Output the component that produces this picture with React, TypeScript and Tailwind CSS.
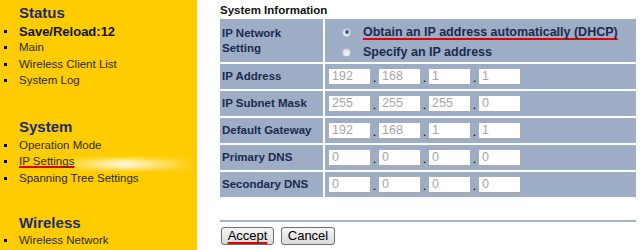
import React from "react";

const font = { fontFamily: '"Liberation Sans", Arial, sans-serif' };

const redLine = "underline decoration-[#e00000] decoration-2 [text-decoration-skip-ink:none]";

function NavItem({ children, bold, active }: { children: React.ReactNode; bold?: boolean; active?: boolean }) {
  return (
    <li className="relative flex h-[16.5px] items-center">
      <span className="ml-[4px] h-[3px] w-[3px] shrink-0 bg-black" />
      {active && (
        <span className="absolute left-[55px] top-[5px] h-[10px] w-[140px] bg-linear-to-r from-transparent via-white/85 to-transparent blur-[2px]" />
      )}
      <span
        className={
          bold
            ? "relative ml-[12px] whitespace-nowrap text-[13px] font-bold text-[#111]"
            : active
            ? `relative ml-[12px] whitespace-nowrap text-[11.5px] text-[#2b2a1a] ${redLine} underline-offset-[1px]`
            : "relative ml-[12px] whitespace-nowrap text-[11.5px] text-[#2b2a1a]"
        }
      >
        {children}
      </span>
    </li>
  );
}

function Heading({ children, className }: { children: React.ReactNode; className?: string }) {
  return <h3 className={`ml-[19px] text-[15px] font-bold leading-[20px] text-[#1b2a6e] ${className || ""}`}>{children}</h3>;
}

function IpInputs({ values }: { values: string[] }) {
  return (
    <div className="flex items-center pl-[3px]">
      {values.map((v, i) => (
        <React.Fragment key={i}>
          {i > 0 && <span className="flex h-[17px] w-[7px] items-end justify-center text-[13px] leading-[14px] text-black">.</span>}
          <input
            readOnly
            value={v}
            className="h-[17px] w-[43px] border border-[#acacac] bg-white pl-[3px] text-[12.5px] text-[#a6a6a6] outline-none"
          />
        </React.Fragment>
      ))}
    </div>
  );
}

const rows: [string, string[]][] = [
  ["IP Address", ["192", "168", "1", "1"]],
  ["IP Subnet Mask", ["255", "255", "255", "0"]],
  ["Default Gateway", ["192", "168", "1", "1"]],
  ["Primary DNS", ["0", "0", "0", "0"]],
  ["Secondary DNS", ["0", "0", "0", "0"]],
];

function Radio({ checked }: { checked?: boolean }) {
  return (
    <span className="ml-[17px] flex h-[9px] w-[9px] shrink-0 items-center justify-center rounded-full border border-[#b9c1cd] bg-linear-to-b from-[#dedede] to-[#fafafa]">
      {checked && <span className="h-[4px] w-[4px] rounded-full bg-[#2d5fa8]" />}
    </span>
  );
}

export default function App() {
  return (
    <div className="flex h-[250px] w-[640px] overflow-hidden bg-white" style={font}>
      <aside className="w-[197px] shrink-0 bg-[#ffcc00] pt-[3px]">
        <Heading>Status</Heading>
        <ul>
          <NavItem bold>Save/Reload:12</NavItem>
          <NavItem>Main</NavItem>
          <NavItem>Wireless Client List</NavItem>
          <NavItem>System Log</NavItem>
        </ul>
        <Heading className="mt-[28px]">System</Heading>
        <ul>
          <NavItem>Operation Mode</NavItem>
          <NavItem active>IP Settings</NavItem>
          <NavItem>Spanning Tree Settings</NavItem>
        </ul>
        <Heading className="mt-[26px]">Wireless</Heading>
        <ul>
          <NavItem>Wireless Network</NavItem>
        </ul>
      </aside>

      <main className="flex-1 pl-[23px] pr-[4px] pt-[3px]">
        <h2 className="h-[14px] text-[11.5px] font-bold leading-[14px] text-[#111]">System Information</h2>
        <div className="mt-[2px] grid grid-cols-[103px_1fr] gap-[2px]">
          <div className="flex h-[43px] items-center bg-[#9cadc5] pl-[2px] text-[11.5px] font-bold leading-[14.5px] text-[#1a2a50]">
            IP Network
            <br />
            Setting
          </div>
          <div className="flex h-[43px] flex-col justify-center gap-[6px] bg-[#9cadc5] pt-[3px] text-[12.5px] font-bold leading-[14px] text-[#1a2a50]">
            <div className="flex items-center">
              <Radio checked />
              <span className={`ml-[12px] ${redLine} underline-offset-[1.5px]`}>
                Obtain an IP address automatically (DHCP)
              </span>
            </div>
            <div className="flex items-center">
              <Radio />
              <span className="ml-[12px]">Specify an IP address</span>
            </div>
          </div>
          {rows.map(([label, values]) => (
            <React.Fragment key={label}>
              <div className="flex h-[25px] items-center bg-[#9cadc5] pl-[2px] text-[11.5px] font-bold text-[#1a2a50]">{label}</div>
              <div className="flex h-[25px] items-center bg-[#9cadc5]">
                <IpInputs values={values} />
              </div>
            </React.Fragment>
          ))}
        </div>

        <div className="mt-[23px] h-[2px] bg-[#a3b2c9]" />

        <div className="mt-[5px] flex gap-[7px] pl-[1px]">
          <button className="h-[18px] w-[53px] rounded-[3px] border border-[#707070] bg-linear-to-b from-[#f6f6f6] to-[#dadada] text-[13px] leading-[14px] text-black">
            <span className={`${redLine} underline-offset-[1.5px]`}>Accept</span>
          </button>
          <button className="h-[18px] w-[54px] rounded-[3px] border border-[#707070] bg-linear-to-b from-[#f6f6f6] to-[#dadada] text-[13px] leading-[14px] text-black">
            Cancel
          </button>
        </div>
      </main>
    </div>
  );
}
